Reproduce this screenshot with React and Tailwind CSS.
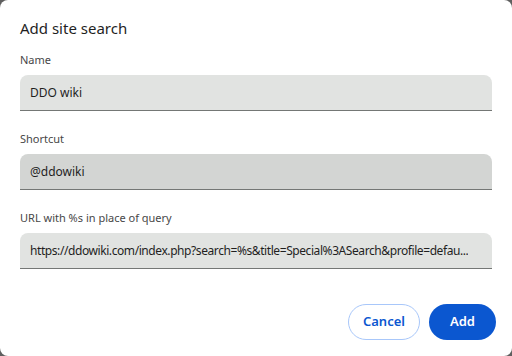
import React from 'react';

const font = { fontFamily: '"Noto Sans", "Open Sans", Arial, sans-serif' };

const Field = ({ label, value, tone = 'bg-[#e1e3e1]', tight = false }) => (
  <div className="flex flex-col">
    <label className="text-[11px] leading-[16px] text-[#474747] mb-[7px]">{label}</label>
    <div
      className={`h-[36px] ${tone} rounded-t-[8px] border-b border-[#747775] pl-[10px] pr-[8px] flex items-center`}
    >
      <span
        className={`text-[12px] text-[#1f1f1f] whitespace-nowrap overflow-hidden ${
          tight ? 'tracking-[-0.42px]' : ''
        }`}
      >
        {value}
      </span>
    </div>
  </div>
);

export default function App() {
  return (
    <div className="w-[512px] h-[356px] bg-[#5f5f5f]" style={font}>
      <div className="w-full h-full bg-white rounded-[8px] px-[20px] pt-[17px] flex flex-col">
        <h1 className="text-[15px] leading-[22px] text-[#1f1f1f] mb-[13px]">Add site search</h1>

        <div className="flex flex-col gap-[20px]">
          <Field label="Name" value="DDO wiki" />
          <Field label="Shortcut" value="@ddowiki" tone="bg-[#d3d5d3]" />
          <Field
            label="URL with %s in place of query"
            value="https://ddowiki.com/index.php?search=%s&title=Special%3ASearch&profile=defau..."
            tight
          />
        </div>

        <div className="flex justify-end gap-[9px] mt-[35px] -mr-[4px]">
          <button className="h-[36px] px-[14px] rounded-full border border-[#a8c7fa] text-[#0b57d0] text-[13px] font-semibold">
            Cancel
          </button>
          <button className="h-[36px] px-[21px] rounded-full bg-[#0b57d0] text-white text-[13px] font-semibold">
            Add
          </button>
        </div>
      </div>
    </div>
  );
}
